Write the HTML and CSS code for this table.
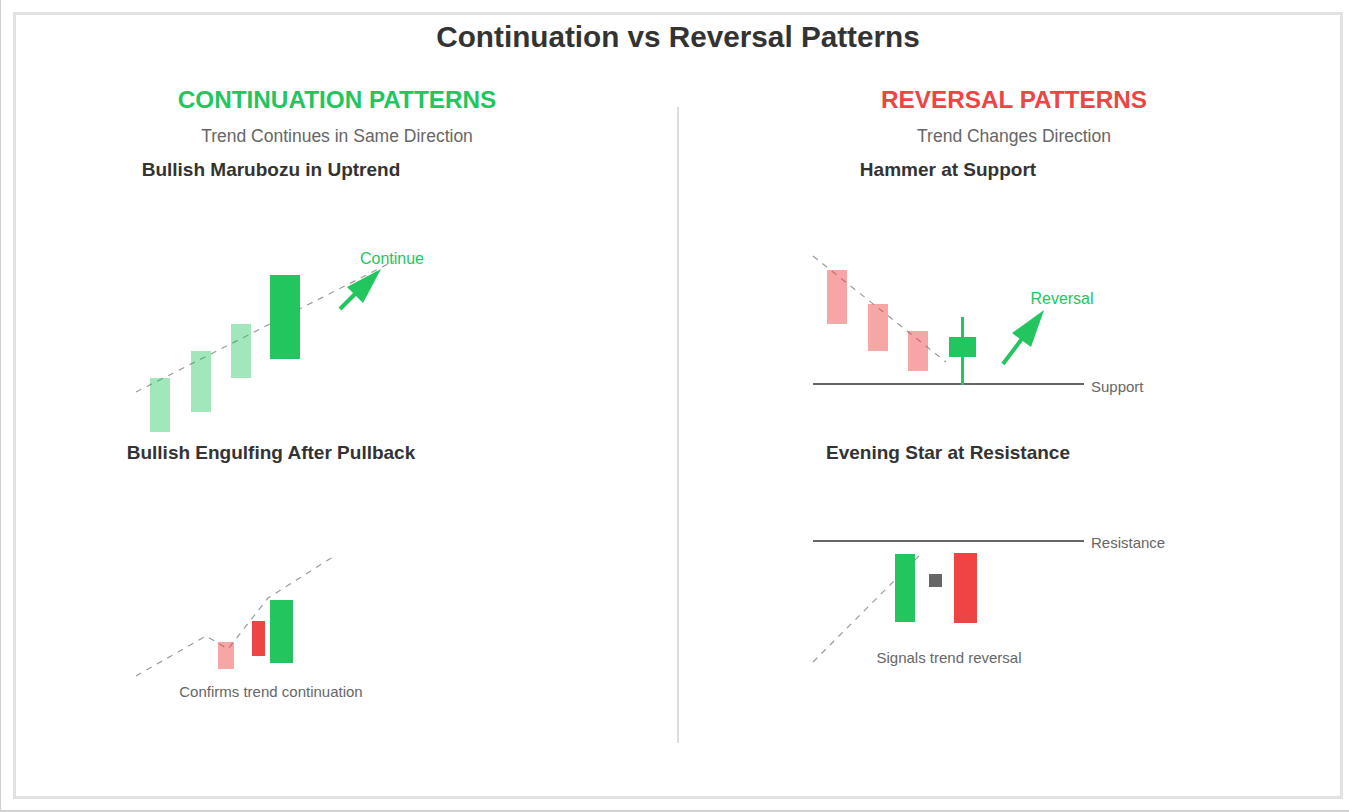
FILE: index.html
```html
<!DOCTYPE html>
<html lang="en">
<head>
<meta charset="utf-8">
<title>Continuation vs Reversal Patterns</title>
<link rel="stylesheet" href="styles.css">
</head>
<body>
<div class="frame">
  <div class="box">
    <h1 class="title">Continuation vs Reversal Patterns</h1>
    <div class="columns">
      <section class="col col-left">
        <h2 class="head head-green">CONTINUATION PATTERNS</h2>
        <p class="sub">Trend Continues in Same Direction</p>

        <div class="chart chart-left">
          <h3 class="chart-title">Bullish Marubozu in Uptrend</h3>
          <svg class="chart-svg" width="500" height="261" viewBox="21 181 500 261">
            <line x1="136" y1="392" x2="394" y2="261" class="dash"/>
            <rect x="150" y="378" width="20" height="54" class="g-light"/>
            <rect x="191" y="351" width="20" height="61" class="g-light"/>
            <rect x="231" y="324" width="20" height="54" class="g-light"/>
            <rect x="270" y="275" width="30" height="84" class="g-solid"/>
            <line x1="340" y1="309" x2="365" y2="284" class="arrow-line"/>
            <polygon points="381,269 347,287 363,303" class="arrow-head"/>
            <text x="392" y="264" class="lbl-green" text-anchor="middle">Continue</text>
          </svg>

          <h3 class="chart-title">Bullish Engulfing After Pullback</h3>
          <svg class="chart-svg" width="500" height="261" viewBox="21 464 500 261">
            <polyline points="136,676 206,636 228,649 268,598 336,555" class="dash"/>
            <rect x="218" y="642" width="16" height="27" class="r-light"/>
            <rect x="252" y="621" width="13" height="35" class="r-solid"/>
            <rect x="270" y="600" width="23" height="63" class="g-solid"/>
            <text x="271" y="697" class="caption" text-anchor="middle">Confirms trend continuation</text>
          </svg>
        </div>
      </section>

      <div class="divider"></div>

      <section class="col col-right">
        <h2 class="head head-red">REVERSAL PATTERNS</h2>
        <p class="sub">Trend Changes Direction</p>

        <div class="chart chart-right">
          <h3 class="chart-title">Hammer at Support</h3>
          <svg class="chart-svg" width="500" height="261" viewBox="698 181 500 261">
            <line x1="813" y1="256" x2="946" y2="362" class="dash"/>
            <rect x="827" y="270" width="20" height="54" class="r-light"/>
            <rect x="868" y="304" width="20" height="47" class="r-light"/>
            <rect x="908" y="331" width="20" height="40" class="r-light"/>
            <line x1="813" y1="384" x2="1084" y2="384" class="level"/>
            <line x1="962.5" y1="317" x2="962.5" y2="385" class="wick"/>
            <rect x="949" y="337" width="27" height="20" class="g-solid"/>
            <line x1="1003" y1="364" x2="1024" y2="336" class="arrow-line"/>
            <polygon points="1044,310 1012,333 1031,347" class="arrow-head"/>
            <text x="1062" y="304" class="lbl-green" text-anchor="middle">Reversal</text>
            <text x="1091" y="392" class="caption">Support</text>
          </svg>

          <h3 class="chart-title">Evening Star at Resistance</h3>
          <svg class="chart-svg" width="500" height="261" viewBox="698 464 500 261">
            <line x1="813" y1="541" x2="1084" y2="541" class="level"/>
            <text x="1091" y="548" class="caption">Resistance</text>
            <line x1="813" y1="662" x2="922" y2="553" class="dash"/>
            <rect x="895" y="554" width="20" height="68" class="g-solid"/>
            <rect x="929" y="574" width="13" height="13" class="star"/>
            <rect x="954" y="553" width="23" height="70" class="r-solid"/>
            <text x="949" y="663" class="caption" text-anchor="middle">Signals trend reversal</text>
          </svg>
        </div>
      </section>
    </div>
  </div>
</div>
</body>
</html>
```

FILE: styles.css
```css
* { box-sizing: border-box; }

html, body {
  margin: 0;
  padding: 0;
  background: #ffffff;
}

body {
  font-family: "Liberation Sans", Arial, sans-serif;
  color: #333333;
}

.frame {
  width: 1349px;
  height: 812px;
  border-left: 1px solid #cfcfcf;
  border-bottom: 2px solid #cfcfcf;
  padding: 12px 0 0 12px;
  overflow: hidden;
}

.box {
  width: 1330px;
  height: 787px;
  border: 3px solid #e2e2e2;
  background: #ffffff;
}

.title {
  margin: 0;
  padding-top: 5px;
  font-size: 29.7px;
  line-height: 34px;
  font-weight: bold;
  text-align: center;
  color: #333333;
}

.columns {
  display: grid;
  grid-template-columns: 661px 2px 661px;
  margin-top: 32px;
}

.col {
  display: flex;
  flex-direction: column;
}

.col-left { padding-right: 19px; }
.col-right { padding-left: 9px; }

.divider {
  margin-top: 21px;
  height: 636px;
  background: #dddddd;
}

.head {
  margin: 0;
  font-size: 24.3px;
  line-height: 28px;
  font-weight: bold;
  text-align: center;
}

.head-green { color: #22c55e; }
.head-red { color: #ef4444; }

.sub {
  margin: 12px 0 0;
  font-size: 17.5px;
  line-height: 20px;
  text-align: center;
  color: #666666;
}

.chart {
  width: 500px;
  margin-top: 13px;
}

.chart-left { margin-left: 5px; }
.chart-right { margin-left: 10px; }

.chart-title {
  margin: 0;
  font-size: 19px;
  line-height: 22px;
  font-weight: bold;
  text-align: center;
  color: #333333;
}

.chart-svg {
  display: block;
  overflow: visible;
}

.dash {
  fill: none;
  stroke: #999999;
  stroke-width: 1.2;
  stroke-dasharray: 6 6;
}

.g-light { fill: #22c55e; fill-opacity: 0.42; }
.g-solid { fill: #22c55e; }
.r-light { fill: #ef4444; fill-opacity: 0.48; }
.r-solid { fill: #ef4444; }
.star { fill: #666666; }

.level {
  stroke: #666666;
  stroke-width: 2;
}

.wick {
  stroke: #22c55e;
  stroke-width: 3;
}

.arrow-line {
  stroke: #22c55e;
  stroke-width: 4;
}

.arrow-head { fill: #22c55e; }

.lbl-green {
  font-family: "Liberation Sans", Arial, sans-serif;
  font-size: 16px;
  fill: #22c55e;
}

.caption {
  font-family: "Liberation Sans", Arial, sans-serif;
  font-size: 15px;
  fill: #666666;
}
```
